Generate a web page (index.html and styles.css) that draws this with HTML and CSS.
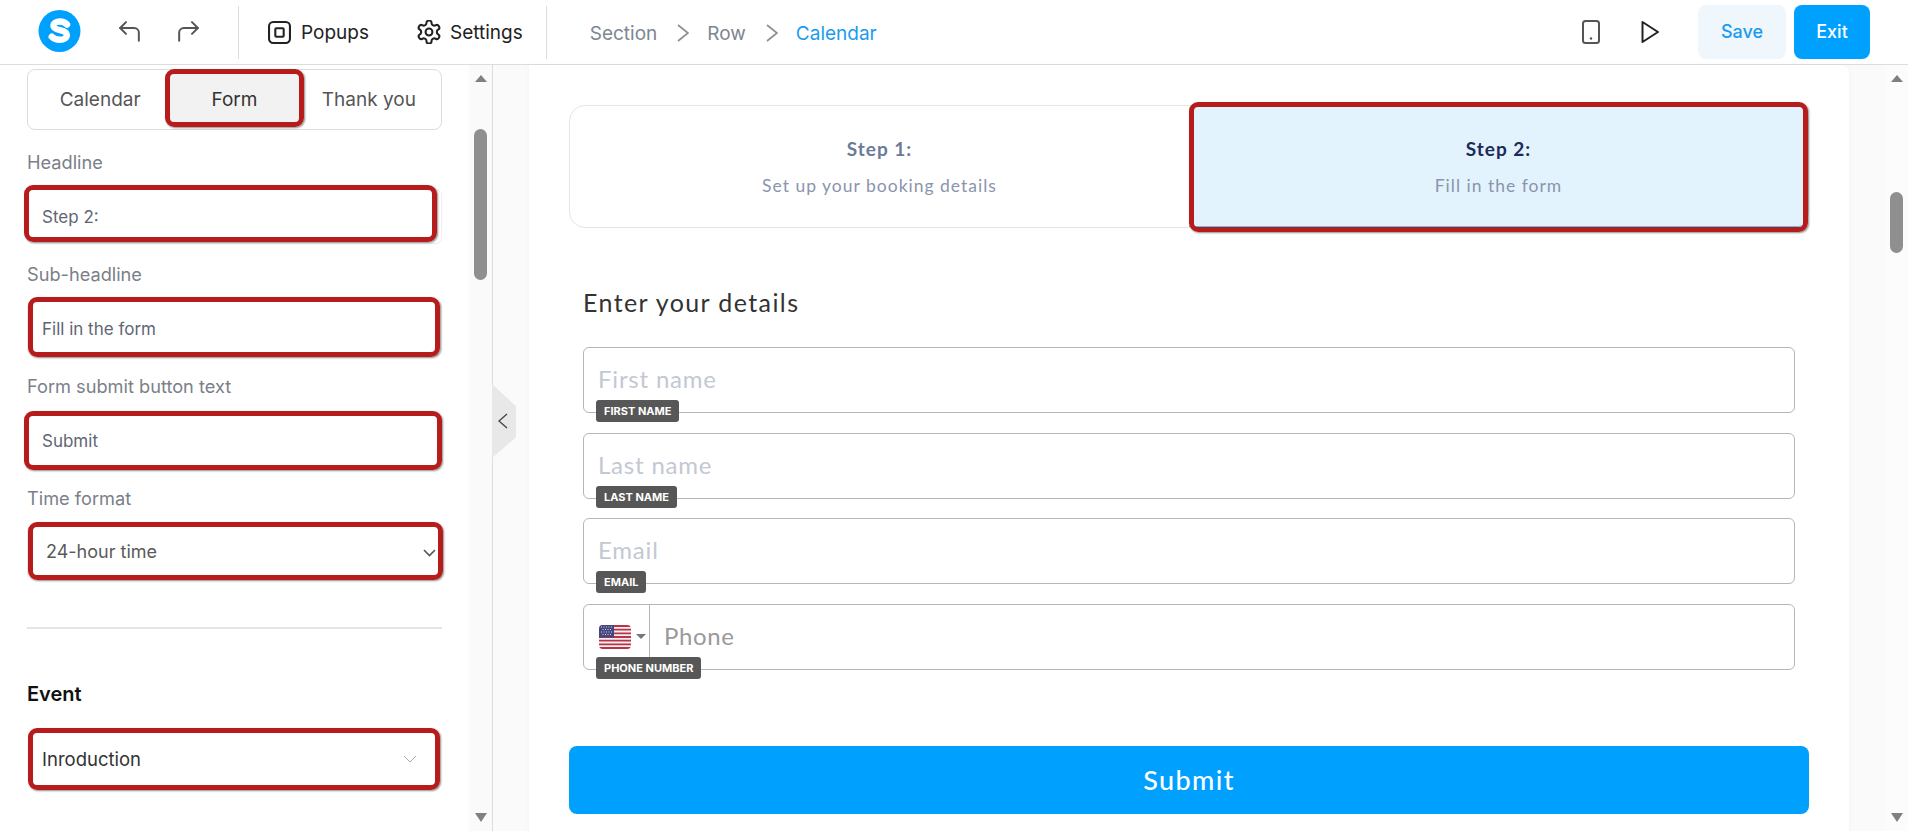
FILE: index.html
```html
<!DOCTYPE html>
<html lang="en">
  <head>
    <meta charset="UTF-8" />
    <meta name="viewport" content="width=device-width, initial-scale=1.0" />
    <title>Calendar editor</title>
    <link rel="stylesheet" href="styles.css">
  </head>
  <body>
    <header class="topbar">
      <svg class="logo" viewBox="0 0 43 42">
        <circle cx="21.5" cy="21" r="21" fill="#00a0ff" />
        <path d="M29 14.500c-1.800-2-4.200-3-7-3-3.800 0-6.500 1.700-6.500 4.300 0 2.700 2.900 3.600 6.500 4.400 4 .9 6.800 1.800 6.800 4.800 0 3-3 4.800-7 4.800-3.300 0-6-1.100-8-3.100" fill="none" stroke="#fff" stroke-width="6.500" stroke-linecap="round" />
      </svg>
      <svg class="icon undo" viewBox="3 3 18 18"><polyline points="9 14 4 9 9 4" /><path d="M20 20v-7a4 4 0 0 0-4-4H4" /></svg>
      <svg class="icon redo" viewBox="3 3 18 18"><polyline points="15 14 20 9 15 4" /><path d="M4 20v-7a4 4 0 0 1 4-4h12" /></svg>
      <span class="bar-divider first-divider"></span>
      <svg class="popups-icon" viewBox="0 0 22 22"><rect x="1" y="1" width="20" height="20" rx="4" /><rect x="7" y="7" width="8" height="8" rx="1" /></svg>
      <span class="bar-text popups-text">Popups</span>
      <svg class="gear-icon" viewBox="1.500 1.500 21 21"><path d="M12.220 2h-.44a2 2 0 0 0-2 2v.18a2 2 0 0 1-1 1.730l-.43.25a2 2 0 0 1-2 0l-.15-.08a2 2 0 0 0-2.730.73l-.22.38a2 2 0 0 0 .73 2.730l.15.1a2 2 0 0 1 1 1.720v.51a2 2 0 0 1-1 1.740l-.15.09a2 2 0 0 0-.73 2.730l.22.38a2 2 0 0 0 2.730.73l.15-.08a2 2 0 0 1 2 0l.43.25a2 2 0 0 1 1 1.730V20a2 2 0 0 0 2 2h.44a2 2 0 0 0 2-2v-.18a2 2 0 0 1 1-1.730l.43-.25a2 2 0 0 1 2 0l.15.08a2 2 0 0 0 2.730-.73l.22-.39a2 2 0 0 0-.73-2.730l-.15-.08a2 2 0 0 1-1-1.740v-.5a2 2 0 0 1 1-1.740l.15-.09a2 2 0 0 0 .73-2.730l-.22-.38a2 2 0 0 0-2.730-.73l-.15.08a2 2 0 0 1-2 0l-.43-.25a2 2 0 0 1-1-1.730V4a2 2 0 0 0-2-2z" /><circle cx="12" cy="12" r="3" /></svg>
      <span class="bar-text settings-text">Settings</span>
      <span class="bar-divider second-divider"></span>
      <nav class="crumbs">
        <span>Section</span>
        <svg class="crumb-arrow" viewBox="0 0 12 18"><polyline points="1 1 11 9 1 17" /></svg>
        <span>Row</span>
        <svg class="crumb-arrow" viewBox="0 0 12 18"><polyline points="1 1 11 9 1 17" /></svg>
        <span class="crumb-current">Calendar</span>
      </nav>
      <svg class="device-icon" viewBox="0 0 18 24"><rect x="1" y="1" width="16" height="22" rx="2.500" /><circle cx="9" cy="18.500" r="1.200" /></svg>
      <svg class="play-icon" viewBox="0 0 18 24"><path d="M1.500 2v20L17 12z" /></svg>
      <button class="save-btn">Save</button>
      <button class="exit-btn">Exit</button>
    </header>

    <div class="workspace">
      <aside class="sidebar">
        <div class="panel">
          <div class="tabs">
            <span class="tab">Calendar</span>
            <span class="tab tab-active">Form</span>
            <span class="tab">Thank you</span>
          </div>
          <div class="field">
            <label class="field-label">Headline</label>
            <input class="text-input" type="text" value="Step 2:" />
          </div>
          <div class="field">
            <label class="field-label">Sub-headline</label>
            <input class="text-input" type="text" value="Fill in the form" />
          </div>
          <div class="field">
            <label class="field-label">Form submit button text</label>
            <input class="text-input" type="text" value="Submit" />
          </div>
          <div class="field">
            <label class="field-label">Time format</label>
            <div class="select-wrap">
              <select class="select-input">
                <option>24-hour time</option>
                <option>12-hour time</option>
              </select>
              <svg class="select-arrow" viewBox="0 0 13 8"><polyline points="1 1 6.500 6.500 12 1" /></svg>
            </div>
          </div>
          <hr class="panel-rule" />
          <h3 class="panel-title">Event</h3>
          <div class="event-select">
            <span>Inroduction</span>
            <svg class="event-arrow" viewBox="0 0 14 8"><polyline points="1 1 7 7 13 1" /></svg>
          </div>
        </div>
        <div class="scroll-track">
          <span class="arrow-up"></span>
          <span class="thumb side-thumb"></span>
          <span class="arrow-down"></span>
        </div>
      </aside>

      <main class="stage">
        <span class="collapse-tab">
          <svg viewBox="0 0 10 16"><polyline points="9 1 1 8 9 15" /></svg>
        </span>
        <div class="card">
          <div class="steps">
            <div class="step">
              <strong>Step 1:</strong>
              <span>Set up your booking details</span>
            </div>
            <div class="step step-active">
              <strong>Step 2:</strong>
              <span>Fill in the form</span>
            </div>
          </div>
          <h2 class="details-title">Enter your details</h2>
          <form class="details-form">
            <div class="form-row">
              <input class="form-input" type="text" placeholder="First name" />
              <span class="badge">FIRST NAME</span>
            </div>
            <div class="form-row">
              <input class="form-input" type="text" placeholder="Last name" />
              <span class="badge">LAST NAME</span>
            </div>
            <div class="form-row">
              <input class="form-input" type="text" placeholder="Email" />
              <span class="badge">EMAIL</span>
            </div>
            <div class="form-row phone-row">
              <div class="country">
                <svg class="flag" viewBox="0 0 32 24">
                  <defs><clipPath id="flag-round"><rect width="32" height="24" rx="4" /></clipPath></defs>
                  <g clip-path="url(#flag-round)">
                    <rect width="32" height="24" fill="#f4f0f0" />
                    <path d="M0 1h32M0 4.700h32M0 8.400h32M0 12h32M0 15.700h32M0 19.400h32M0 23h32" stroke="#b8344a" stroke-width="1.800" />
                    <rect width="15" height="12.500" fill="#45457f" />
                    <path d="M2 2h11M3.500 4.500h9M2 7h11M3.500 9.500h9" stroke="#d8d8e8" stroke-width="1" stroke-dasharray="1 1.500" />
                  </g>
                </svg>
                <span class="caret"></span>
              </div>
              <input class="phone-input" type="text" placeholder="Phone" />
              <span class="badge">PHONE NUMBER</span>
            </div>
          </form>
          <button class="submit-btn" type="button">Submit</button>
        </div>
        <div class="stage-gutter"></div>
        <div class="scroll-track page-track">
          <span class="arrow-up"></span>
          <span class="thumb page-thumb"></span>
          <span class="arrow-down"></span>
        </div>
      </main>
    </div>

    <!-- red annotation boxes drawn over the screenshot -->
    <div class="mark mark-tab"></div>
    <div class="mark mark-headline"></div>
    <div class="mark mark-sub"></div>
    <div class="mark mark-submit"></div>
    <div class="mark mark-time"></div>
    <div class="mark mark-event"></div>
    <div class="mark mark-step"></div>
  </body>
</html>
```

FILE: styles.css
```css
* {
  box-sizing: border-box;
}
body {
  margin: 0;
  height: 831px;
  overflow: hidden;
  position: relative;
  background: #fff;
  font-family: Inter, "Liberation Sans", sans-serif;
}

/* top bar */
.topbar {
  height: 65px;
  border-bottom: 1px solid #ddd;
  display: flex;
  align-items: center;
  padding: 0 38px;
}
.logo {
  width: 43px;
  height: 42px;
  margin-top: -2px;
  flex: none;
}
.icon {
  width: 21px;
  height: 21px;
  fill: none;
  stroke: #555;
  stroke-width: 1.700;
  stroke-linecap: round;
  stroke-linejoin: round;
  margin-top: -2px;
}
.undo {
  margin-left: 38px;
}
.redo {
  margin-left: 38px;
}
.bar-divider {
  width: 1px;
  height: 53px;
  background: #ddd;
}
.first-divider {
  margin-left: 39px;
}
.popups-icon {
  width: 23px;
  height: 23px;
  margin-left: 29px;
  fill: none;
  stroke: #222;
  stroke-width: 2;
}
.bar-text {
  font-size: 19px;
  color: #222;
}
.popups-text {
  margin-left: 10px;
}
.gear-icon {
  width: 24px;
  height: 24px;
  margin-left: 48px;
  fill: none;
  stroke: #222;
  stroke-width: 1.800;
  stroke-linecap: round;
  stroke-linejoin: round;
}
.settings-text {
  margin-left: 9px;
}
.second-divider {
  margin-left: 23px;
}
.crumbs {
  display: flex;
  align-items: center;
  margin-left: 43px;
  padding-top: 2px;
  font-size: 19px;
  color: #7e8691;
}
.crumb-arrow {
  width: 12px;
  height: 18px;
  margin: 0 18px 0 20px;
  fill: none;
  stroke: #8a8f96;
  stroke-width: 1.700;
}
.crumb-current {
  color: #1a9bf0;
}
.device-icon {
  width: 18px;
  height: 24px;
  margin-left: auto;
  fill: none;
  stroke: #555;
  stroke-width: 2;
}
.device-icon circle {
  fill: #555;
  stroke: none;
}
.play-icon {
  width: 18px;
  height: 24px;
  margin-left: 41px;
  fill: none;
  stroke: #222;
  stroke-width: 2;
  stroke-linejoin: round;
}
.save-btn,
.exit-btn {
  height: 54px;
  padding-bottom: 3px;
  border: none;
  border-radius: 8px;
  font-family: inherit;
  font-size: 18px;
  font-weight: 500;
}
.save-btn {
  width: 88px;
  margin-left: 39px;
  background: #eff7fd;
  color: #1a9bf0;
}
.exit-btn {
  width: 76px;
  margin-left: 8px;
  background: #00a0ff;
  color: #fff;
}

/* layout under the bar */
.workspace {
  display: flex;
  height: 766px;
}
.sidebar {
  width: 493px;
  flex: none;
  display: flex;
  border-right: 1px solid #ddd;
}
.panel {
  width: 469px;
  padding: 4px 27px 0;
  overflow: hidden;
}

/* scrollbars */
.scroll-track {
  width: 23px;
  background: #fafafa;
  display: flex;
  flex-direction: column;
  align-items: center;
  padding-top: 10px;
  position: relative;
}
.arrow-up {
  border-left: 6px solid transparent;
  border-right: 6px solid transparent;
  border-bottom: 7px solid #808080;
}
.arrow-down {
  border-left: 6px solid transparent;
  border-right: 6px solid transparent;
  border-top: 9px solid #808080;
  margin-top: auto;
  margin-bottom: 9px;
}
.thumb {
  width: 13px;
  background: #8f8f8f;
  border-radius: 7px;
}
.side-thumb {
  height: 151px;
  margin-top: 47px;
}
.page-thumb {
  height: 61px;
  margin-top: 110px;
}

/* sidebar content */
.tabs {
  display: flex;
  height: 61px;
  padding: 4px 5px;
  border: 1px solid #ddd;
  border-radius: 8px;
  margin-bottom: 20px;
}
.tab {
  flex: 1;
  display: flex;
  align-items: center;
  justify-content: center;
  font-size: 19px;
  color: #555;
  border-radius: 6px;
}
.tab-active {
  background: #f2f2f2;
  color: #333;
}
.field {
  height: 112px;
}
.field-label {
  display: block;
  height: 24px;
  line-height: 24px;
  font-size: 18.200px;
  color: #7b8088;
  margin-bottom: 15px;
}
.text-input {
  display: block;
  width: 100%;
  height: 55px;
  padding: 0 14px;
  border: 1px solid #eee;
  border-radius: 6px;
  font-family: inherit;
  font-size: 17px;
  color: #5f6673;
  outline: none;
}
.select-wrap {
  position: relative;
}
.select-input {
  display: block;
  width: 100%;
  height: 55px;
  padding: 0 18px 2px;
  border: 1px solid #eee;
  border-radius: 6px;
  background: #fff;
  appearance: none;
  font-family: inherit;
  font-size: 18px;
  color: #5a5a5a;
}
.select-arrow {
  position: absolute;
  right: 6px;
  top: 24px;
  width: 13px;
  height: 8px;
  fill: none;
  stroke: #555;
  stroke-width: 1.600;
}
.panel-rule {
  height: 2px;
  border: none;
  background: #e5e5e5;
  margin: 29px 0 53px;
}
.panel-title {
  margin: 0 0 22px;
  height: 24px;
  line-height: 24px;
  font-size: 20px;
  font-weight: 600;
  color: #111;
}
.event-select {
  height: 62px;
  display: flex;
  align-items: center;
  justify-content: space-between;
  padding: 0 25px 0 15px;
  font-size: 18.500px;
  color: #333;
}
.event-arrow {
  width: 14px;
  height: 8px;
  fill: none;
  stroke: #aaa;
  stroke-width: 1;
}

/* canvas */
.stage {
  flex: 1;
  display: flex;
  position: relative;
  background: #fafafa;
  padding-left: 36px;
}
.collapse-tab {
  position: absolute;
  left: -1px;
  top: 319px;
  width: 24px;
  height: 74px;
  background: #e8e8e8;
  clip-path: polygon(0 0, 100% 30%, 100% 72%, 0 100%);
  display: flex;
  align-items: center;
  padding-left: 6px;
}
.collapse-tab svg {
  width: 10px;
  height: 16px;
  fill: none;
  stroke: #444;
  stroke-width: 1.300;
}
.card {
  width: 1320px;
  background: #fff;
  border-top-right-radius: 8px;
  padding: 40px 40px 0;
  box-shadow: 0 0 6px rgba(0, 0, 0, 0.03);
  font-family: Lato, "Open Sans", sans-serif;
}
.stage-gutter {
  width: 36px;
}
.page-track {
  background: #fcfcfc;
}
.steps {
  display: flex;
  height: 123px;
  border: 1px solid #e3e5e8;
  border-radius: 16px;
}
.step {
  flex: 1;
  display: flex;
  flex-direction: column;
  align-items: center;
  justify-content: center;
  gap: 13px;
  padding-top: 2px;
  font-size: 17.500px;
  letter-spacing: 1px;
  line-height: 24px;
  color: #8a94ad;
}
.step strong {
  font-size: 19px;
  font-weight: 700;
  color: #6b7a99;
}
.step-active {
  background: #e3f3fd;
  border-radius: 0 10px 10px 0;
  border-bottom: 1px solid #5cc3ec;
}
.step-active strong {
  color: #1c2b5a;
}
.details-title {
  margin: 59px 0 30px 14px;
  height: 30px;
  line-height: 30px;
  font-size: 25px;
  font-weight: 400;
  letter-spacing: 1.400px;
  color: #333;
}
.details-form {
  margin-left: 14px;
  width: 1212px;
}
.form-row {
  position: relative;
  height: 66px;
  margin-bottom: 19.500px;
}
.form-input,
.phone-row {
  border: 1px solid #b3b6bb;
  border-radius: 6px;
}
.form-input {
  display: block;
  width: 100%;
  height: 100%;
  padding: 0 14px 3px;
  font-family: inherit;
  font-size: 24px;
  letter-spacing: 0.800px;
  outline: none;
}
.form-input::placeholder {
  color: #c3c8d4;
}
.phone-row {
  display: flex;
}
.country {
  width: 66px;
  border-right: 1px solid #b3b6bb;
  display: flex;
  align-items: center;
  padding: 0 0 0 15px;
  gap: 5px;
}
.flag {
  width: 32px;
  height: 24px;
}
.caret {
  border-left: 5px solid transparent;
  border-right: 5px solid transparent;
  border-top: 5px solid #777;
}
.phone-input {
  flex: 1;
  border: none;
  background: none;
  padding: 0 14px 2px;
  font-family: inherit;
  font-size: 24px;
  letter-spacing: 0.600px;
  outline: none;
}
.phone-input::placeholder {
  color: #9a9a9a;
}
.badge {
  position: absolute;
  left: 13px;
  bottom: -9px;
  height: 22px;
  line-height: 22px;
  padding: 0 8px;
  background: #575757;
  border-radius: 3px;
  color: #fff;
  font-family: Inter, sans-serif;
  font-size: 11px;
  font-weight: 700;
}
.phone-row .badge {
  left: 12px;
  bottom: -10px;
}
.submit-btn {
  display: block;
  width: 1240px;
  height: 68px;
  margin-top: 76.500px;
  padding-bottom: 3px;
  border: none;
  border-radius: 8px;
  background: #00a0ff;
  color: #fff;
  font-family: inherit;
  font-size: 27px;
  font-weight: 500;
  letter-spacing: 1.400px;
}

/* annotations */
.mark {
  position: absolute;
  border: 5px solid #b71c1c;
  border-radius: 9px;
  box-shadow: 1px 1px 2px rgba(0, 0, 0, 0.45);
}
.mark-tab {
  left: 165px;
  top: 69px;
  width: 139px;
  height: 58px;
}
.mark-headline {
  left: 24px;
  top: 185px;
  width: 413px;
  height: 57px;
}
.mark-sub {
  left: 28px;
  top: 297px;
  width: 412px;
  height: 60px;
}
.mark-submit {
  left: 24px;
  top: 411px;
  width: 418px;
  height: 59px;
}
.mark-time {
  left: 28px;
  top: 522px;
  width: 415px;
  height: 58px;
}
.mark-event {
  left: 28px;
  top: 728px;
  width: 412px;
  height: 62px;
}
.mark-step {
  left: 1189px;
  top: 102px;
  width: 619px;
  height: 130px;
}
```
